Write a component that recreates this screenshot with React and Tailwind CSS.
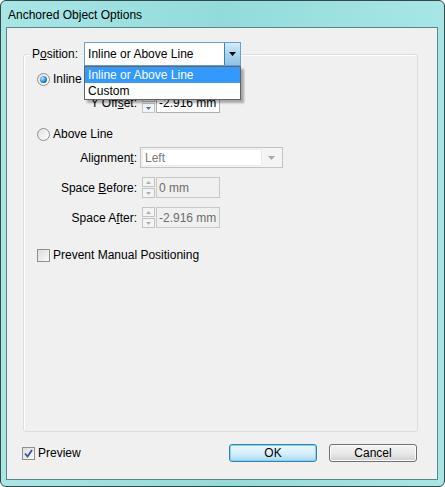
import React from "react";

const font = { fontFamily: '"Liberation Sans", Arial, sans-serif' };

function Spinner({ enabled }) {
    const arrow = enabled ? "#4a6fbf" : "#b0b0b0";
    return (
        <div className="flex flex-col w-[13px] h-[21px] gap-[1px]">
            <div className="flex-1 border border-[#c3c3c3] bg-[#f4f4f4] flex items-center justify-center">
                <svg width="5" height="3" viewBox="0 0 5 3"><path d="M0 3 L2.5 0 L5 3 Z" fill={arrow} /></svg>
            </div>
            <div className="flex-1 border border-[#c3c3c3] bg-[#f4f4f4] flex items-center justify-center">
                <svg width="5" height="3" viewBox="0 0 5 3"><path d="M0 0 L5 0 L2.5 3 Z" fill={arrow} /></svg>
            </div>
        </div>
    );
}

function NumField({ value, enabled }) {
    return (
        <div className={`w-[64px] h-[21px] border overflow-hidden whitespace-nowrap pl-[2px] flex items-center ${enabled ? "border-[#abadb3] bg-white text-black" : "border-[#c8c8c8] bg-[#f0f0f0] text-[#6d6d6d]"}`}>
            {value}
        </div>
    );
}

function Radio({ checked }) {
    return (
        <div className="w-[13px] h-[13px] rounded-full border border-[#8e8f8f] bg-gradient-to-br from-[#e0e0e0] to-[#ffffff] flex items-center justify-center">
            {checked && (
                <div className="w-[7px] h-[7px] rounded-full bg-[radial-gradient(circle_at_35%_35%,#bfe6ff,#1b7ad2_60%,#0a4f94)]" />
            )}
        </div>
    );
}

function Checkbox({ checked }) {
    return (
        <div className="w-[13px] h-[13px] border border-[#8e8f8f] bg-gradient-to-br from-[#dcdcdc] to-[#fafafa] flex items-center justify-center">
            {checked && (
                <svg width="9" height="9" viewBox="0 0 9 9">
                    <path d="M1 4.5 L3.5 7.5 L8 1" stroke="#3b52a8" strokeWidth="1.8" fill="none" />
                </svg>
            )}
        </div>
    );
}

export default function App() {
    return (
        <div className="w-[445px] h-[487px] text-[12px] text-black" style={font}>
            <div className="w-full h-full flex flex-col border border-[#34494a] rounded-[6px] bg-gradient-to-r from-[#a9e6e6] via-[#93dbdb] to-[#a8e6e6]">
                {/* title bar */}
                <div className="h-[26px] flex items-center pl-[7px] pt-[1px] text-[12px] text-black">
                    Anchored Object Options
                </div>

                {/* client area */}
                <div className="flex-1 ml-[5px] mr-[6px] mb-[6px] border border-[#5a8686] bg-[#f0f0f0] flex flex-col">
                    {/* group box */}
                    <div className="mt-[26px] ml-[16px] mr-[19px] h-[378px] border border-[#d5dfe5] rounded-[3px] shadow-[inset_1px_1px_0_#ffffff] flex flex-col">
                        {/* header: Position */}
                        <div className="-mt-[13px] h-[24px] flex items-center">
                            <span className="ml-[5px] px-[3px] bg-[#f0f0f0]">
                                P<span className="underline">o</span>sition:
                            </span>
                            <div className="relative ml-[3px]">
                                <div className="w-[157px] h-[24px] flex border border-[#6e9ec4] bg-white">
                                    <div className="flex-1 flex items-center pl-[3px]">Inline or Above Line</div>
                                    <div className="w-[16px] h-full border-l border-[#3c7fb1] bg-gradient-to-b from-[#d6ecfa] via-[#a9d5f1] to-[#8ec3e8] flex items-center justify-center">
                                        <svg width="7" height="4" viewBox="0 0 7 4"><path d="M0 0 L7 0 L3.5 4 Z" fill="#000" /></svg>
                                    </div>
                                </div>
                                {/* open list */}
                                <div className="absolute left-0 top-full z-10 w-[157px] border border-[#646464] bg-white shadow-[3px_3px_2px_rgba(0,0,0,0.3)]">
                                    <div className="h-[16px] flex items-center pl-[3px] bg-[#3399ff] text-white">Inline or Above Line</div>
                                    <div className="h-[16px] flex items-center pl-[3px]">Custom</div>
                                </div>
                            </div>
                        </div>

                        {/* Inline */}
                        <div className="mt-[3px] h-[20px] flex items-center pl-[13px] gap-[3px]">
                            <Radio checked />
                            <span>Inline</span>
                        </div>

                        {/* Y Offset */}
                        <div className="mt-[3px] h-[21px] flex items-center">
                            <span className="w-[113px] text-right">Y Off<span className="underline">s</span>et:</span>
                            <div className="ml-[5px] flex items-center gap-[1px]">
                                <Spinner enabled />
                                <NumField value="-2.916 mm" enabled />
                            </div>
                        </div>

                        {/* Above Line */}
                        <div className="mt-[11px] h-[20px] flex items-center pl-[13px] gap-[3px]">
                            <Radio />
                            <span>Above Line</span>
                        </div>

                        {/* Alignment */}
                        <div className="mt-[3px] h-[21px] flex items-center">
                            <span className="w-[113px] text-right">Alignmen<span className="underline">t</span>:</span>
                            <div className="ml-[3px] w-[143px] h-[21px] border border-[#c3c3c3] bg-[#f4f4f4] flex p-[1px]">
                                <div className="w-[120px] bg-white border border-[#ececec] flex items-center pl-[2px] text-[#7a7a7a]">Left</div>
                                <div className="flex-1 flex items-center justify-center">
                                    <svg width="7" height="4" viewBox="0 0 7 4"><path d="M0 0 L7 0 L3.5 4 Z" fill="#a8a8a8" /></svg>
                                </div>
                            </div>
                        </div>

                        {/* Space Before */}
                        <div className="mt-[9px] h-[21px] flex items-center">
                            <span className="w-[113px] text-right">Space <span className="underline">B</span>efore:</span>
                            <div className="ml-[5px] flex items-center gap-[1px]">
                                <Spinner />
                                <NumField value="0 mm" />
                            </div>
                        </div>

                        {/* Space After */}
                        <div className="mt-[9px] h-[21px] flex items-center">
                            <span className="w-[113px] text-right">Space A<span className="underline">f</span>ter:</span>
                            <div className="ml-[5px] flex items-center gap-[1px]">
                                <Spinner />
                                <NumField value="-2.916 mm" />
                            </div>
                        </div>

                        {/* Prevent Manual Positioning */}
                        <div className="mt-[17px] h-[20px] flex items-center pl-[13px] gap-[3px]">
                            <Checkbox />
                            <span>Prevent Manual Positioning</span>
                        </div>
                    </div>

                    {/* footer */}
                    <div className="mt-[12px] h-[18px] flex items-center">
                        <div className="ml-[15px] flex items-center gap-[3px]">
                            <Checkbox checked />
                            <span>Preview</span>
                        </div>
                        <div className="ml-auto mr-[20px] flex gap-[12px]">
                            <button className="w-[88px] h-[18px] rounded-[3px] border border-[#3c7fb1] bg-gradient-to-b from-[#eaf6fd] via-[#d9f0fc] to-[#a7d9f5] shadow-[inset_0_0_0_1px_#7fd3f5] flex items-center justify-center">
                                OK
                            </button>
                            <button className="w-[88px] h-[18px] rounded-[3px] border border-[#707070] bg-gradient-to-b from-[#f2f2f2] via-[#ebebeb] to-[#cfcfcf] shadow-[inset_0_0_0_1px_#fcfcfc] flex items-center justify-center">
                                Cancel
                            </button>
                        </div>
                    </div>
                </div>
            </div>
        </div>
    );
}
